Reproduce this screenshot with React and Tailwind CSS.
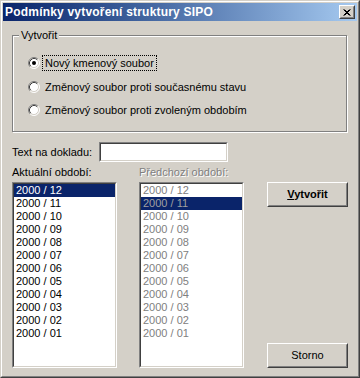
import React, { useState } from "react";

const periods = ["12", "11", "10", "09", "08", "07", "06", "05", "04", "03", "02", "01"].map(m => `2000 / ${m}`);

const Radio = ({ checked }) => (
  <svg width="12" height="12" viewBox="0 0 12 12" className="shrink-0">
    <circle cx="6" cy="6" r="5" fill="#fff" />
    <path d="M 2.11 9.89 A 5.5 5.5 0 0 1 9.89 2.11" stroke="#808080" fill="none" />
    <path d="M 9.89 2.11 A 5.5 5.5 0 0 1 2.11 9.89" stroke="#fff" fill="none" />
    <path d="M 2.82 9.18 A 4.5 4.5 0 0 1 9.18 2.82" stroke="#404040" fill="none" />
    <path d="M 9.18 2.82 A 4.5 4.5 0 0 1 2.82 9.18" stroke="#d4d0c8" fill="none" />
    {checked && <circle cx="6" cy="6" r="2" fill="#000" />}
  </svg>
);

const Sunken = ({ className, children }) => (
  <div className={`border border-t-[#808080] border-l-[#808080] border-r-white border-b-white ${className}`}>
    <div className="h-full border border-t-[#404040] border-l-[#404040] border-r-[#d4d0c8] border-b-[#d4d0c8] bg-white">
      {children}
    </div>
  </div>
);

const Button = ({ children, bold }) => (
  <button className="w-[81px] h-[25px] border border-t-white border-l-white border-r-[#404040] border-b-[#404040] bg-[#d4d0c8] p-0">
    <div className={`h-full border border-t-[#d4d0c8] border-l-[#d4d0c8] border-r-[#808080] border-b-[#808080] flex items-center justify-center text-black ${bold ? "font-bold" : "font-normal"}`}>
      {children}
    </div>
  </button>
);

const ListBox = ({ selected, disabled }) => (
  <Sunken className="w-[105px] h-[186px]">
    {periods.map((p, i) => (
      <div
        key={p}
        className={`h-[13px] leading-[13px] pl-[2px] ${
          i === selected
            ? disabled ? "bg-[#0a246a] text-[#a0a0a0]" : "bg-[#0a246a] text-white"
            : disabled ? "text-[#808080]" : "text-black"
        }`}
      >
        {p}
      </div>
    ))}
  </Sunken>
);

export default function App() {
  const [mode, setMode] = useState(0);
  const options = ["Nový kmenový soubor", "Změnový soubor proti současnému stavu", "Změnový soubor proti zvoleným obdobím"];

  return (
    <div className="w-[360px] h-[378px] border border-t-[#d4d0c8] border-l-[#d4d0c8] border-r-[#404040] border-b-[#404040] bg-[#d4d0c8] text-[11px] text-black" style={{ fontFamily: '"Liberation Sans", Arial, sans-serif' }}>
      <div className="h-full border border-t-white border-l-white border-r-[#808080] border-b-[#808080] p-px flex flex-col">
        {/* title bar */}
        <div className="h-[18px] bg-gradient-to-r from-[#0a246a] to-[#a6caf0] flex items-center pl-[2px] pr-[2px]">
          <span className="text-white font-bold text-[12px] flex-1 tracking-[0.2px]">Podmínky vytvoření struktury SIPO</span>
          <div className="w-[16px] h-[14px] border border-t-white border-l-white border-r-[#404040] border-b-[#404040] bg-[#d4d0c8]">
            <div className="h-full border border-t-[#d4d0c8] border-l-[#d4d0c8] border-r-[#808080] border-b-[#808080] flex items-center justify-center">
              <svg width="8" height="7" viewBox="0 0 8 7">
                <path d="M0.5 0.5 L6.5 6.5 M1.5 0.5 L7.5 6.5 M6.5 0.5 L0.5 6.5 M7.5 0.5 L1.5 6.5" stroke="#000" strokeWidth="1" />
              </svg>
            </div>
          </div>
        </div>

        <div className="flex-1 pl-[9px] pr-[10px]">
          {/* group box */}
          <div className="relative mt-[14px] h-[97px] border border-[#808080] shadow-[inset_1px_1px_0_#fff,1px_1px_0_#fff] pl-[15px] pt-[19px]">
            <span className="absolute -top-[8px] left-[6px] px-[2px] bg-[#d4d0c8] leading-[14px]">Vytvořit</span>
            {options.map((o, i) => (
              <div
                key={o}
                onClick={() => setMode(i)}
                className={`flex items-center h-[16px] ${i === 1 ? "mt-[8px]" : i === 2 ? "mt-[7px]" : ""}`}
              >
                <Radio checked={mode === i} />
                <span className={`ml-[3px] px-[2px] leading-[14px] ${mode === i ? "outline outline-1 outline-dotted outline-black" : ""}`}>{o}</span>
              </div>
            ))}
          </div>

          {/* text row */}
          <div className="flex items-center mt-[10px]">
            <span className="w-[87px]">Text na dokladu:</span>
            <Sunken className="w-[129px] h-[20px]" />
          </div>

          {/* lists */}
          <div className="flex mt-[4px]">
            <div className="flex flex-col">
              <span className="leading-[13px] mb-[3px]">Aktuální období:</span>
              <ListBox selected={0} />
            </div>
            <div className="flex flex-col ml-[22px]">
              <span className="leading-[13px] mb-[3px] text-[#808080] [text-shadow:1px_1px_0_#fff]">Předchozí období:</span>
              <ListBox selected={1} disabled />
            </div>
            <div className="flex flex-col justify-between ml-[23px] pt-[16px]">
              <Button bold><span><span className="underline">V</span>ytvořit</span></Button>
              <Button>Storno</Button>
            </div>
          </div>
        </div>
      </div>
    </div>
  );
}
